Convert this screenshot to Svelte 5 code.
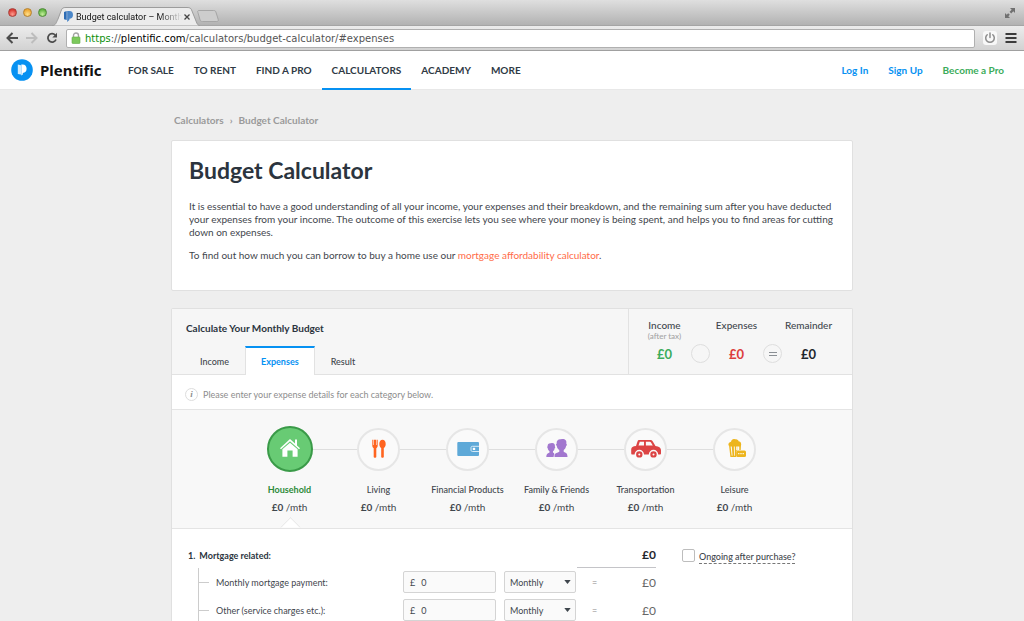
<script>
  const nav = ['FOR SALE', 'TO RENT', 'FIND A PRO', 'CALCULATORS', 'ACADEMY', 'MORE'];
  const tabs = ['Income', 'Expenses', 'Result'];
  const categories = [
    { id: 'household', name: 'Household' },
    { id: 'living', name: 'Living' },
    { id: 'financial', name: 'Financial Products' },
    { id: 'family', name: 'Family & Friends' },
    { id: 'transport', name: 'Transportation' },
    { id: 'leisure', name: 'Leisure' }
  ];
  let activeTab = $state('Expenses');
  let activeCategory = $state('household');
  let rows = $state([
    { id: 'mortgage', label: 'Monthly mortgage payment:', value: '0' },
    { id: 'other', label: 'Other (service charges etc.):', value: '0' }
  ]);
</script>

<div class="window">
  <div class="tabstrip">
    <div class="lights">
      <button class="light red" aria-label="Close window"></button>
      <button class="light amber" aria-label="Minimise window"></button>
      <button class="light green" aria-label="Zoom window"></button>
    </div>
    <div class="browser-tab">
      <svg class="tab-shape" viewBox="0 0 148 19" preserveAspectRatio="none" aria-hidden="true">
        <path d="M0 19C4 18 4 16 6 12L9 4C10 1 11 .5 14 .5H135C138 .5 139 1 140 4L144 14C145 17 146 18.500 148 19Z" fill="#ececec" stroke="#9c9c9c" />
      </svg>
      <svg class="favicon" viewBox="0 0 10 12" aria-hidden="true">
        <path d="M0 1L3 0V10L0 9Z" fill="#2d6cb5" />
        <path d="M3.500 0H6C8.800 0 10 1.800 10 4.200S8.500 8.500 6 8.500V10L3.500 12Z" fill="#4a86c8" />
      </svg>
      <span class="tab-title">Budget calculator – Month</span>
      <button class="tab-close" aria-label="Close tab">
        <svg viewBox="0 0 6 6"><path d="M.5 .5L5.500 5.500M5.500 .5L.5 5.500" stroke="#444" stroke-width="1.300" /></svg>
      </button>
    </div>
    <button class="new-tab" aria-label="New tab">
      <svg viewBox="0 0 24 13"><path d="M2 .5H18C19.500 .5 20 1 20.500 2L23 10C23.500 11.500 23 12.500 21.500 12.500H6C4.500 12.500 4 12 3.500 11L1 2.500C.6 1.200 1 .5 2 .5Z" fill="#cdcdcd" stroke="#a2a2a2" /></svg>
    </button>
    <button class="fullscreen" aria-label="Full screen">
      <svg viewBox="0 0 12 12" fill="#707070"><path d="M6 1H11V6L9.300 4.300L7.200 6.400L5.600 4.800L7.700 2.700ZM1 6L2.700 7.700L4.200 6.200L5.800 7.800L4.300 9.300L6 11H1Z" /></svg>
    </button>
  </div>

  <div class="toolbar">
    <button class="tool" aria-label="Back">
      <svg viewBox="0 0 12 12" fill="none" stroke="#4c4c4c" stroke-width="2"><path d="M12 6H2M6.500 1L1.500 6L6.500 11" /></svg>
    </button>
    <button class="tool" aria-label="Forward">
      <svg viewBox="0 0 12 12" fill="none" stroke="#bdbdbd" stroke-width="2"><path d="M0 6H10M5.500 1L10.500 6L5.500 11" /></svg>
    </button>
    <button class="tool" aria-label="Reload">
      <svg viewBox="0 0 12 12"><path d="M9.200 3A4.200 4.200 0 1 0 10 7.500" fill="none" stroke="#4c4c4c" stroke-width="1.800" /><path d="M11 .8V5.500H6.300Z" fill="#4c4c4c" /></svg>
    </button>
    <div class="address">
      <svg class="lock" viewBox="0 0 10 12" aria-hidden="true">
        <path d="M2.500 6V3.500A2.500 2.500 0 0 1 7.500 3.500V6" fill="none" stroke="#a5a5a5" stroke-width="1.400" />
        <rect x="1" y="5" width="8" height="6.500" rx=".8" fill="#7cc95c" stroke="#61ad45" stroke-width=".6" />
      </svg>
      <span class="url"><span class="scheme">https</span>://<b>plentific.com</b>/calculators/budget-calculator/#expenses</span>
    </div>
    <button class="tool power" aria-label="Power">
      <svg viewBox="0 0 12 12" fill="none" stroke="#8d8d8d" stroke-width="1.500" stroke-linecap="round"><path d="M6 1V5.500M3.200 2.700A4.300 4.300 0 1 0 8.800 2.700" /></svg>
    </button>
    <button class="tool" aria-label="Menu">
      <svg viewBox="0 0 12 12" stroke="#3b3b3b" stroke-width="2"><path d="M.5 2H11.500M.5 6H11.500M.5 10H11.500" /></svg>
    </button>
  </div>

  <div class="page">
    <header class="site-header">
      <a class="brand" href="#home">
        <svg viewBox="0 0 22 22" aria-hidden="true">
          <circle cx="11" cy="11" r="10.800" fill="#0691f2" />
          <path d="M6.800 5.500L10 6.200V15.500L6.800 15Z" fill="#d4ecfd" />
          <path d="M10.300 5.500H11.500C14.400 5.500 15.600 7.500 15.600 9.800S14.200 14 11.800 14V15.500L10.300 16.600Z" fill="#fff" />
        </svg>
        <span>Plentific</span>
      </a>
      <nav>
        {#each nav as item}
          <a href="#{item}" class:current={item === 'CALCULATORS'}>{item}</a>
        {/each}
      </nav>
      <div class="account">
        <a href="#login">Log In</a>
        <a href="#signup">Sign Up</a>
        <a href="#pro" class="pro">Become a Pro</a>
      </div>
    </header>

    <main>
      <div class="crumbs"><a href="#calculators">Calculators</a><span>›</span><a href="#budget">Budget Calculator</a></div>

      <section class="card intro">
        <h1>Budget Calculator</h1>
        <p>It is essential to have a good understanding of all your income, your expenses and their breakdown, and the remaining sum after you have deducted your expenses from your income. The outcome of this exercise lets you see where your money is being spent, and helps you to find areas for cutting down on expenses.</p>
        <p>To find out how much you can borrow to buy a home use our <a href="#mortgage">mortgage affordability calculator</a>.</p>
      </section>

      <section class="card calc">
        <div class="calc-head">
          <div class="calc-left">
            <h2>Calculate Your Monthly Budget</h2>
            <div class="tabs" role="tablist">
              {#each tabs as tab}
                <button role="tab" aria-selected={activeTab === tab} class:active={activeTab === tab} onclick={() => (activeTab = tab)}>{tab}</button>
              {/each}
            </div>
          </div>
          <div class="summary">
            <div class="sum"><span>Income</span><small>(after tax)</small><strong class="g">£0</strong></div>
            <i class="op"></i>
            <div class="sum"><span>Expenses</span><small></small><strong class="r">£0</strong></div>
            <i class="op"><svg viewBox="0 0 8 6" stroke="#8a8f94"><path d="M0 1.500H8M0 4.500H8" /></svg></i>
            <div class="sum"><span>Remainder</span><small></small><strong>£0</strong></div>
          </div>
        </div>

        <div class="info"><i>i</i>Please enter your expense details for each category below.</div>

        <div class="steps">
          {#each categories as c}
            <button class="step" class:active={activeCategory === c.id} onclick={() => (activeCategory = c.id)}>
              <span class="ring-row">
                <span class="ring">
                  {#if c.id === 'household'}
                    <svg viewBox="0 0 24 24" fill="#fff"><path d="M12 2L17 6.600V2.500H19V8.500L22 11.300L21 12.200L12 4.300L3 12.200L2 11.300Z" /><path d="M12 5.700L19.600 12.300V19.800H14.600V13.500H9.400V19.800H4.400V12.300Z" /></svg>
                  {:else if c.id === 'living'}
                    <svg viewBox="0 0 24 24" fill="#ff6420"><path d="M5.300 2.700H6.400V8H7V2.700H9V8H9.600V2.700H10.700V8.500C10.700 10 10 10.800 9.300 11.200V20C9.300 21 6.700 21 6.700 20V11.200C6 10.800 5.300 10 5.300 8.500Z" /><path d="M15.500 2.700C17.600 2.700 18.700 4.600 18.700 6.900C18.700 9 17.800 10.400 16.800 10.900V20C16.800 21 14.200 21 14.200 20V10.900C13.200 10.400 12.300 9 12.300 6.900C12.300 4.600 13.400 2.700 15.500 2.700Z" /></svg>
                  {:else if c.id === 'financial'}
                    <svg viewBox="0 0 24 24"><rect x="1.300" y="5" width="21.700" height="14" rx="1" fill="#5ea9d8" /><path d="M23 9.300H16.500C15.400 9.300 15 9.900 15 10.800V13C15 14 15.500 14.500 16.500 14.500H23" fill="#5ea9d8" stroke="#e4f2fb" stroke-width=".9" /><rect x="16.800" y="10.800" width="2.400" height="2.300" rx=".6" fill="#fff" /></svg>
                  {:else if c.id === 'family'}
                    <svg viewBox="0 0 24 24" fill="#a277cf"><path d="M1.300 20C1.300 17.300 2.300 16.500 4.500 15.600V14.200C3.300 13.500 2.800 12.300 2.700 11L2 10L2.700 9.300C2.300 6.800 4 6 6 6.200C8.800 5.600 10.200 7 9.900 9.500L10.300 10.500L9.700 11.200C9.500 12.800 8.800 13.700 8 14.200V15.600L9.200 16.300L8.600 20Z" /><path d="M9.500 20V17.500C10 16.200 12.500 15.600 14.300 14.700V12.900C12.800 12.200 12 10.600 11.800 9L10.900 7.800L11.700 6.600C11.200 3.500 13.200 1.900 16 2.200C19.500 1.400 22 2.900 21.300 6.600L22 7.900L21.100 9C20.800 11 19.900 12.300 18.700 12.900V14.700C21 15.900 22.500 16 22.500 20Z" /></svg>
                  {:else if c.id === 'transport'}
                    <svg class="wide" viewBox="0 0 32 24"><path d="M9.500 3H20C21.300 3 22.100 3.400 22.800 4.500L25.500 9C29 9.400 30.800 10.500 31 13V16.500C31 17.300 30.600 17.500 29.500 17.500H28.200A4.700 4.700 0 0 0 18.800 17.500H14A4.700 4.700 0 0 0 4.600 17.500H2.500C1.500 17.500 1.200 17 1.200 16V12.500C1.200 10 3 9.200 6 9L7.500 4.500C7.900 3.400 8.400 3 9.500 3Z" fill="#dc4444" /><path d="M9.800 4.800H14V8.500H8.500ZM15.900 4.800H19.800C20.400 4.800 20.700 5 21 5.500L22.800 8.500H15.900Z" fill="#fafafa" /><circle cx="9.300" cy="17.400" r="2.100" fill="none" stroke="#dc4444" stroke-width="2.200" /><circle cx="23.500" cy="17.400" r="2.100" fill="none" stroke="#dc4444" stroke-width="2.200" /></svg>
                  {:else}
                    <svg viewBox="0 0 24 24"><path d="M5.500 8.500C5 6.300 6.300 5 8 4.700C8.500 2.500 10.500 1.500 12 2.300C13.800 1.700 15.500 2.800 15.600 4.300C18 4.800 18.600 6.500 18 8.800Z" fill="#edb51d" /><path d="M6 8H18L17.700 13H16.300V9.500H14.500V13C13.500 13.500 13.200 14 13.200 15V20H7.400Z" fill="#edb51d" /><path d="M7.600 9.500H8.800L9.500 18.800H8.700ZM10.800 9.500H11.800V18.800H11.100ZM13.200 9.500H14.500V13H13.200Z" fill="#fafafa" /><rect x="13.200" y="13.500" width="9.800" height="6.500" rx="1.500" fill="#edb51d" /><path d="M15.200 16.700H21.200" stroke="#fff" stroke-width="1.200" stroke-dasharray="1.200 1" /></svg>
                  {/if}
                </span>
              </span>
              <span class="step-name">{c.name}</span>
              <span class="step-sum"><b>£0</b> /mth</span>
            </button>
          {/each}
        </div>

        <div class="form">
          <div class="group-head">
            <h3><span>1.</span>Mortgage related:</h3>
            <strong class="total">£0</strong>
            <label class="ongoing"><input type="checkbox" /><span>Ongoing after purchase?</span></label>
          </div>
          <div class="lines">
            {#each rows as row}
              <div class="line">
                <label for={row.id}>{row.label}</label>
                <span class="money"><span>£</span><input id={row.id} type="text" bind:value={row.value} /></span>
                <span class="period">
                  <select aria-label="{row.label} period"><option>Monthly</option></select>
                  <svg viewBox="0 0 8 5" aria-hidden="true"><path d="M0 0H8L4 5Z" fill="#3f464d" /></svg>
                </span>
                <span class="eq">=</span>
                <span class="amount">£0</span>
              </div>
            {/each}
          </div>
        </div>
      </section>
    </main>
  </div>
</div>

<style>
  :global(body) { margin: 0; background: #eee; }
  * { box-sizing: border-box; }
  button { padding: 0; border: 0; background: none; font: inherit; color: inherit; }
  a { text-decoration: none; color: inherit; }
  svg { display: block; }

  .window { display: flex; flex-direction: column; height: 100vh; overflow: hidden; font-family: Lato, sans-serif; font-size: 9px; color: #3f464d; }
  .tabstrip { display: flex; align-items: flex-end; height: 26px; flex: none; padding: 0 8px; background: linear-gradient(#dfdfdf, #b2b2b2); border-bottom: 1px solid #a5a5a5; }
  .lights { display: flex; gap: 6px; align-self: center; width: 44px; }
  .light { width: 9px; height: 9px; border-radius: 50%; border: 1px solid #8a5b55; }
  .red { background: radial-gradient(circle at 50% 75%, #ff9d90, #d93a32 70%); border-color: #a8403a; }
  .amber { background: radial-gradient(circle at 50% 75%, #ffe08c, #eda735 70%); border-color: #b5822f; }
  .green { background: radial-gradient(circle at 50% 75%, #c5f09c, #62b443 70%); border-color: #4f8c38; }
  .browser-tab { position: relative; display: flex; align-items: center; width: 148px; height: 19px; padding: 0 12px; margin-bottom: -1px; }
  .tab-shape { position: absolute; inset: 0; width: 100%; height: 100%; }
  .favicon { position: relative; flex: none; width: 9px; height: 11px; margin-right: 3px; }
  .tab-title { position: relative; flex: 1; white-space: nowrap; font-family: Roboto, sans-serif; line-height: 14px; color: #111; -webkit-mask-image: linear-gradient(90deg, #000 78%, transparent); mask-image: linear-gradient(90deg, #000 78%, transparent); }
  .tab-close { position: relative; flex: none; width: 6px; height: 6px; margin: 0 0 0 2px; }
  .tab-close svg { width: 6px; height: 6px; }
  .new-tab { margin: 0 0 3px -4px; }
  .new-tab svg { width: 24px; height: 12px; }
  .fullscreen { margin-left: auto; align-self: center; }
  .fullscreen svg { width: 12px; height: 12px; }

  .toolbar { display: flex; align-items: center; gap: 8px; flex: none; height: 25px; padding: 0 7px 0 6px; background: linear-gradient(#ececec, #d2d2d2); border-bottom: 1px solid #a0a0a0; }
  .tool { flex: none; width: 12px; height: 12px; }
  .tool svg { width: 12px; height: 12px; }
  .power { display: grid; place-items: center; width: 14px; height: 14px; border-radius: 3px; background: #f8f8f8; }
  .address { flex: 1; display: flex; align-items: center; gap: 4px; height: 19px; padding: 0 4px; background: #fff; border: 1px solid #b0b0b0; border-radius: 2px; }
  .lock { width: 10px; height: 12px; }
  .url { font: 10px/15px "DejaVu Sans", sans-serif; color: #555; }
  .url b { font-weight: 400; color: #000; }
  .scheme { color: #0b8f0b; }

  .page { flex: 1; min-height: 0; display: flex; flex-direction: column; overflow: hidden; background: #eee; }
  .site-header { display: flex; flex: none; height: 39px; padding: 0 20px 0 11px; background: #fff; border-bottom: 1px solid #e8e8e8; }
  .brand { display: flex; align-items: center; gap: 7px; width: 107px; font: 700 15px/20px "Noto Sans", sans-serif; color: #111; }
  .brand svg { width: 22px; height: 22px; }
  nav { display: flex; flex: 1; }
  nav a { height: 39px; padding: 0 10px; font-size: 10px; font-weight: 700; line-height: 38px; color: #2f3a45; white-space: nowrap; }
  nav .current { border-bottom: 2px solid #0691f2; }
  .account { display: flex; gap: 20px; font-size: 10px; line-height: 38px; font-weight: 700; color: #0691f2; }
  .pro { color: #3bac5b; }

  main { flex: 1; display: flex; flex-direction: column; width: 100%; max-width: 684px; margin: 0 auto; padding: 0 1px; min-height: 0; }
  .crumbs { display: flex; flex: none; gap: 6px; height: 50px; padding: 24px 3px 0; font-size: 10px; line-height: 13px; font-weight: 700; color: #9a9a9a; }
  .card { background: #fff; border: 1px solid #e0e0e0; border-radius: 2px; }
  .intro { flex: none; padding: 15px 17px 18px; margin-bottom: 17px; }
  h1 { margin: 0 0 16px; font-size: 23px; line-height: 28px; font-weight: 700; color: #2b343e; }
  p { margin: 0 0 10px; font-size: 10px; line-height: 13px; }
  p a { color: #ff6b48; }
  .calc { flex: 1 0 auto; border-bottom: 0; border-radius: 2px 2px 0 0; }
  .calc-head { display: flex; height: 66px; background: #f6f6f6; border-bottom: 1px solid #e2e2e2; }
  .calc-left { flex: 1; display: flex; flex-direction: column; justify-content: space-between; border-right: 1px solid #e2e2e2; }
  h2 { margin: 12px 14px 0; font-size: 10px; line-height: 14px; font-weight: 700; color: #2b343e; }
  .tabs { display: flex; height: 29px; padding-left: 12px; margin-bottom: -1px; }
  .tabs button { padding: 0 15px; border: 1px solid transparent; border-width: 2px 1px 0; font-weight: 500; }
  .tabs .active { background: #fff; border-color: #0691f2 #e2e2e2; color: #0691f2; font-weight: 700; }
  .summary { display: flex; width: 223px; padding: 9px 17px 0 9px; }
  .sum { flex: 1 1 0; display: flex; flex-direction: column; align-items: center; font-size: 10px; line-height: 14px; font-weight: 500; }
  .sum small { height: 9px; font-size: 8px; line-height: 9px; color: #a5a5a5; white-space: nowrap; }
  .sum strong { margin-top: 4px; font-size: 13px; line-height: 18px; font-weight: 700; color: #1f262d; }
  .sum .g { color: #3bac5b; }
  .sum .r { color: #dc3d3d; }
  .op { display: grid; place-items: center; flex: none; width: 19px; height: 19px; margin-top: 26px; border: 1px solid #dedede; border-radius: 50%; }
  .op svg { width: 8px; height: 6px; }

  .info { display: flex; align-items: center; gap: 5px; height: 35px; padding: 4px 13px 0; border-bottom: 1px solid #e4e4e4; color: #8d8d8d; }
  .info i { width: 13px; height: 13px; border: 1px solid #ddd; border-radius: 50%; font: italic 700 9px/11px "Liberation Serif", serif; text-align: center; }

  .steps { display: flex; justify-content: center; height: 119px; padding-top: 16px; background: #f8f8f8; border-bottom: 1px solid #e4e4e4; }
  .step { position: relative; display: flex; flex-direction: column; align-items: center; width: 89px; height: 102px; white-space: nowrap; }
  .ring-row { display: flex; align-items: center; justify-content: center; width: 100%; height: 46px; }
  .ring-row::before, .ring-row::after { content: ""; flex: 1; height: 1px; background: #dedede; }
  .step:first-child .ring-row::before, .step:last-child .ring-row::after { background: none; }
  .ring { display: grid; place-items: center; width: 43px; height: 43px; border: 2px solid #e6e6e6; border-radius: 50%; background: #fafafa; }
  .ring svg { width: 24px; height: 24px; }
  .ring .wide { width: 32px; }
  .active .ring { width: 46px; height: 46px; background: #68cb74; border-color: #3a9a48; }
  .step-name { margin-top: 11px; line-height: 14px; font-weight: 500; }
  .active .step-name { color: #2c8a38; font-weight: 700; }
  .step-sum { margin-top: 3px; font-size: 10px; line-height: 14px; }
  .step-sum b { font-weight: 700; }
  .step.active::after { content: ""; position: absolute; left: 38px; bottom: -7px; width: 14px; height: 14px; background: #fff; border: 1px solid #e4e4e4; border-width: 1px 0 0 1px; transform: rotate(45deg); clip-path: polygon(0 0, 100% 0, 0 100%); }

  .form { padding: 19px 17px 0 16px; }
  .group-head { display: flex; height: 20px; }
  h3 { display: flex; flex: none; gap: 4px; width: 389px; margin: 0; font-size: 9px; line-height: 15px; font-weight: 700; color: #2b343e; }
  .total { width: 79px; border-bottom: 1px solid #c4c4c8; text-align: right; font-size: 12px; line-height: 14px; font-weight: 700; color: #1f262d; }
  .ongoing { display: flex; align-items: flex-start; gap: 4px; margin-left: 26px; font-weight: 500; }
  .ongoing input { appearance: none; width: 13px; height: 13px; margin: 1px 0 0; border: 1px solid #bdbdbd; border-radius: 2px; background: #fff; }
  .ongoing span { margin-top: 3px; line-height: 12px; border-bottom: 1px dashed #777; }
  .lines { margin: 0 0 0 10px; border-left: 1px solid #ccc; }
  .line { display: flex; align-items: center; height: 28px; }
  .line::before { content: ""; width: 10px; height: 1px; background: #ccc; }
  .line label { width: 194px; padding-left: 7px; }
  .money { display: flex; align-items: center; gap: 6px; width: 93px; height: 22px; padding: 0 6px; border: 1px solid #d4d4d4; border-radius: 2px; background: #fafafa; }
  .money input { width: 60px; padding: 0; border: 0; background: none; font: inherit; color: inherit; outline: 0; }
  .period { position: relative; width: 72px; height: 22px; margin-left: 8px; }
  .period select { appearance: none; width: 100%; height: 100%; padding: 0 5px; border: 1px solid #d4d4d4; border-radius: 2px; background: #fafafa; font: inherit; color: inherit; }
  .period svg { position: absolute; right: 5px; top: 9px; width: 7px; height: 4px; pointer-events: none; }
  .eq { width: 37px; text-align: center; color: #888; }
  .amount { width: 43px; text-align: right; font-size: 12px; color: #666; }
</style>
